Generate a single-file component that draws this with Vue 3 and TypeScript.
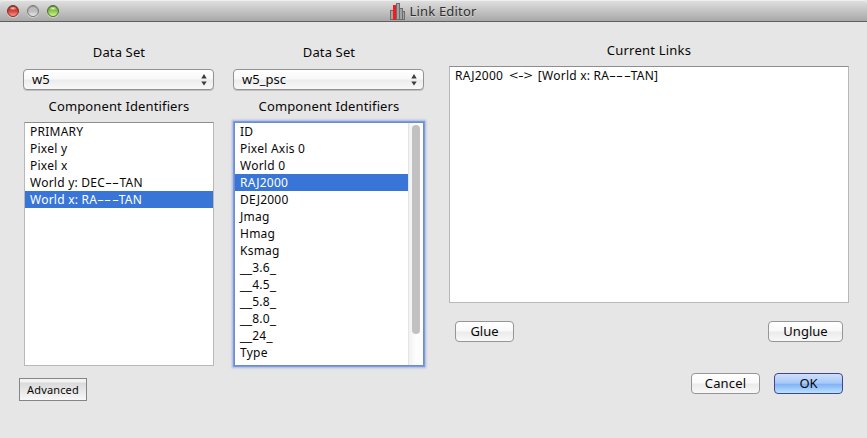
<script setup lang="ts">
import { ref } from 'vue'

interface Source { name: string; rows: string[] }
interface Piece { text: string; kind: string }

const sources: Source[] = [
  {
    name: 'w5',
    rows: ['PRIMARY', 'Pixel y', 'Pixel x', 'World y: DEC--TAN', 'World x: RA---TAN'],
  },
  {
    name: 'w5_psc',
    rows: [
      'ID', 'Pixel Axis 0', 'World 0', 'RAJ2000', 'DEJ2000', 'Jmag', 'Hmag', 'Ksmag',
      '__3.6_', '__4.5_', '__5.8_', '__8.0_', '__24_', 'Type',
    ],
  },
]
const selected = ref<number[]>([4, 3])
const links = ref<string[]>(['RAJ2000 <-> [World x: RA---TAN]'])
const lights = ['red', 'gray', 'green']

// Splits a label so that dashes, underscores and arrows get wide glyphs.
function pieces(label: string): Piece[] {
  return label.split(/(<->|-|_+)/).filter(Boolean).map((text) => ({
    text,
    kind: text === '<->' ? 'arrow' : text === '-' ? 'dash' : text[0] === '_' ? 'under' : 'plain',
  }))
}
function glue() {
  const left = sources[0].rows[selected.value[0]]
  const right = sources[1].rows[selected.value[1]]
  links.value.push(`${right} <-> [${left}]`)
}
function unglue() {
  links.value.pop()
}
</script>

<template>
  <div class="window">
    <header class="titlebar">
      <div class="lights">
        <i v-for="l in lights" :key="l" class="light" :class="l"></i>
      </div>
      <svg class="logo" width="16" height="17" viewBox="0 0 16 17">
        <g fill="#a3a3a3" stroke="#6d6d6d">
          <rect x="0.5" y="7.5" width="3" height="9" />
          <rect x="6.5" y="0.5" width="3" height="16" />
          <rect x="9.5" y="5.5" width="3" height="11" />
          <rect x="12.5" y="8.5" width="2" height="8" />
        </g>
        <rect x="3" y="2" width="3" height="15" fill="#ef1c22" />
      </svg>
      <span class="title">Link Editor</span>
    </header>

    <main class="body">
      <div class="left">
        <div class="columns">
          <section v-for="(s, i) in sources" :key="s.name" class="column">
            <div class="heading">Data Set</div>
            <div class="select">
              <span>{{ s.name }}</span>
              <svg width="6" height="12" viewBox="0 0 6 12">
                <path d="M3 0L5.7 4.4H.3ZM3 11.5L.3 7.5H5.7Z" fill="#3c3c3c" />
              </svg>
            </div>
            <div class="heading ids">Component Identifiers</div>
            <div class="list" :class="{ focused: i === 1 }">
              <ul>
                <li v-for="(r, n) in s.rows" :key="r" :class="{ active: selected[i] === n }" @click="selected[i] = n"><span v-for="(p, k) in pieces(r)" :key="k" :class="p.kind">{{ p.text }}</span></li>
              </ul>
              <div v-if="i === 1" class="scroll"><div class="thumb"></div></div>
            </div>
          </section>
        </div>
        <button class="advanced">Advanced</button>
      </div>

      <section class="right">
        <div class="heading current">Current Links</div>
        <div class="list links">
          <ul>
            <li v-for="(l, n) in links" :key="n"><span v-for="(p, k) in pieces(l)" :key="k" :class="p.kind">{{ p.text }}</span></li>
          </ul>
        </div>
        <div class="actions">
          <button class="btn glue" @click="glue">Glue</button>
          <button class="btn unglue" @click="unglue">Unglue</button>
        </div>
        <div class="dialog">
          <button class="btn cancel">Cancel</button>
          <button class="btn ok">OK</button>
        </div>
      </section>
    </main>
  </div>
</template>

<style>
body { margin: 0; background: #e6e6e6; }
</style>

<style scoped>
* { box-sizing: border-box; }
.window {
  width: 867px; height: 438px; overflow: hidden; background: #e6e6e6; color: #080808;
  font-family: "Noto Sans", "Open Sans", sans-serif; font-size: 13px;
}
.titlebar {
  position: relative; height: 22px; display: flex; align-items: center; justify-content: center;
  background: linear-gradient(#dedede, #a8a8a8); border-top: 1px solid #eee; border-bottom: 1px solid #5f5f5f;
  color: #2f2f2f; text-shadow: 0 1px 0 rgba(255, 255, 255, .45); border-radius: 4px 4px 0 0;
}
.lights { position: absolute; left: 7px; top: 4px; display: flex; gap: 8px; }
.light {
  width: 12px; height: 12px; border-radius: 50%; border: 1px solid #777;
  box-shadow: 0 1px 0 rgba(255, 255, 255, .4), inset 0 1px 1px rgba(0, 0, 0, .25);
}
.red { background: radial-gradient(ellipse 4px 2px at 50% 22%, #fbd3cc, transparent), linear-gradient(#b92f29, #d94138 50%, #ff9587); border-color: #7c2f2b; }
.gray { background: linear-gradient(#c0c0c0, #bcbcbc 50%, #e8e8e8); border-color: #7b7b7b; }
.green { background: radial-gradient(ellipse 4px 2px at 50% 22%, #eaffc8, transparent), linear-gradient(#6ea03b, #8cc650 50%, #cef98d); border-color: #4d702d; }
.logo { margin-right: 3px; margin-top: 1px; }
.title { font-size: 13px; line-height: 20px; letter-spacing: .2px; margin-top: -1px; }
.body { display: flex; justify-content: space-between; padding: 0 18px 0 19px; }
.columns { display: flex; gap: 20px; padding-left: 5px; }
.column { width: 190px; padding-top: 21px; }
.heading { height: 18px; line-height: 18px; text-align: center; white-space: nowrap; letter-spacing: .13px; }
.select {
  display: flex; align-items: center; justify-content: space-between; height: 21px; margin: 8px 0 0 -1px;
  padding: 0 6px 0 8px; border: 1px solid #929292; border-radius: 4px; font-size: 13px; line-height: 18px;
  background: linear-gradient(#fff, #f8f8f8 48%, #ececec 52%, #f8f8f8); box-shadow: 0 1px 0 rgba(120, 120, 120, .35);
}
.select span { margin-top: -1px; }
.ids { margin: 7px 0; }
.list {
  display: flex; height: 244px; overflow: hidden; background: #fff;
  border: 1px solid #b8b8b8; border-top-color: #8e8e8e;
}
.focused { border-color: #6f8dcb; box-shadow: 0 0 0 1px #7c9be0, 0 0 2px 2px #a4b6df; }
ul { flex: 1; margin: 0; padding: 0; list-style: none; }
li { height: 17px; padding-left: 5px; font-size: 12px; line-height: 17px; white-space: pre; letter-spacing: .24px; }
.dash, .arrow { display: inline-block; transform-origin: 0 50%; letter-spacing: 0; }
.dash { transform: scaleX(1.8); margin-right: 3.3px; }
.arrow { transform: scaleX(1.36); margin: 0 8.4px 0 2px; }
.under { font-family: "DejaVu Sans", sans-serif; line-height: 0; letter-spacing: .1px; }
.active { background: #3875d7; color: #fff; }
.scroll { width: 15px; padding: 2px 3px 0 3px; border-left: 1px solid #e5e5e5; background: linear-gradient(90deg, #f1f1f1, #fdfdfd 50%); }
.thumb { width: 8px; height: 209px; border-radius: 4px; background: #c1c1c1; }
.right { width: 400px; padding-top: 19px; }
.current { margin-bottom: 7px; letter-spacing: .22px; }
.links { height: 237px; }
.advanced {
  display: block; width: 68px; height: 23px; margin-top: 12px; padding: 0; border: 1px solid #858585;
  background: linear-gradient(#f3f3f3 0 3px, #dadada 4px, #f8f8f8); font: 11px/20px "Noto Sans", sans-serif; color: #080808;
  letter-spacing: .15px;
}
.actions { display: flex; justify-content: space-between; padding: 18px 6px 0; }
.dialog { display: flex; justify-content: flex-end; gap: 14px; padding: 31px 6px 0 0; }
.btn {
  height: 21px; padding: 0; border: 1px solid #969696; border-radius: 4px; color: #080808;
  background: linear-gradient(#fff, #f9f9f9 48%, #ebebeb 52%, #f8f8f8); font: 13px/17px "Noto Sans", sans-serif;
}
.glue { width: 59px; }
.unglue { width: 75px; }
.cancel { width: 69px; letter-spacing: .15px; }
.ok { width: 69px; border-color: #45458d; background: linear-gradient(#cfe0fa, #a7c8f8 48%, #83b3f5 55%, #b7e3ff); }
</style>
